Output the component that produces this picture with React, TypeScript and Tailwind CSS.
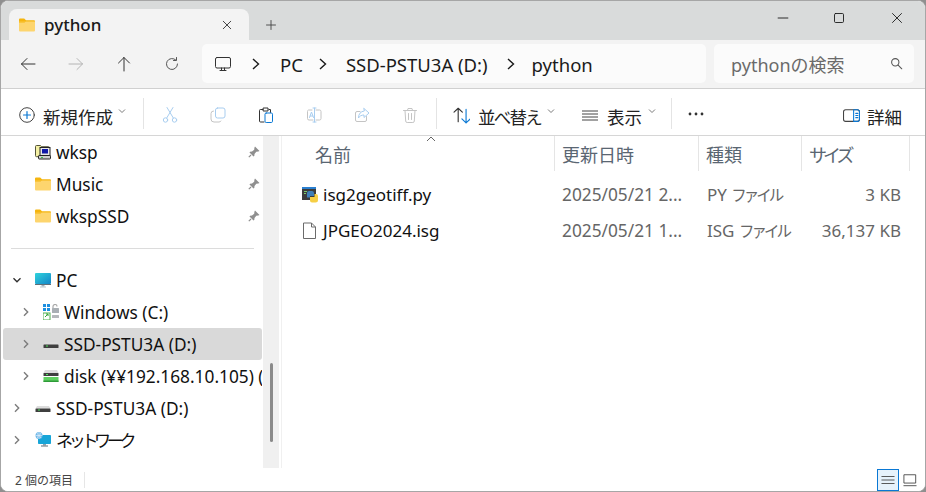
import React from "react";

const S = ({ size = 16, className = "", children, sw = 1.2 }: { size?: number; className?: string; children: React.ReactNode; sw?: number }) => (
  <svg width={size} height={size} viewBox="0 0 16 16" fill="none" stroke="currentColor" strokeWidth={sw} strokeLinecap="round" strokeLinejoin="round" className={`shrink-0 ${className}`}>
    {children}
  </svg>
);

const Folder = ({ size = 16 }: { size?: number }) => (
  <svg width={size} height={size} viewBox="0 0 16 16" className="shrink-0">
    <path d="M0 2.5a1 1 0 0 1 1-1h4.2l1.8 1.7H15a1 1 0 0 1 1 1V5H0z" fill="#f5b50f" />
    <path d="M0 4.5h16v9a1 1 0 0 1-1 1H1a1 1 0 0 1-1-1z" fill="#fdd56e" />
    <path d="M0 4.5h7L5.5 5.6H0z" fill="#f5b50f" />
  </svg>
);

const Wksp = () => (
  <svg width="16" height="16" viewBox="0 0 16 16" className="shrink-0">
    <path d="M.5 2.5a1 1 0 0 1 1-1h4l1 1.2h7a1 1 0 0 1 1 1v8a1 1 0 0 1-1 1h-12a1 1 0 0 1-1-1z" fill="#f4f0a4" stroke="#55553a" />
    <rect x="5" y="3.5" width="10" height="8" fill="#e8e8e8" stroke="#222" />
    <rect x="7" y="5" width="6" height="4.5" fill="#1019a8" />
    <rect x="3.5" y="11.5" width="12" height="3.5" rx=".7" fill="#cfcfcf" stroke="#222" />
    <rect x="6" y="13" width="2" height="1" fill="#38c04c" />
  </svg>
);

const PcIcon = () => (
  <svg width="16" height="16" viewBox="0 0 16 16" className="shrink-0">
    <defs>
      <linearGradient id="pcg" x1="0" y1="0" x2="1" y2="1">
        <stop offset="0" stopColor="#2fd3dc" />
        <stop offset="1" stopColor="#1385c8" />
      </linearGradient>
    </defs>
    <rect x="0" y="1" width="16" height="11" rx="1" fill="url(#pcg)" />
    <rect x="0" y="12" width="16" height="1" fill="#5f6f78" />
    <rect x="6.5" y="13" width="3" height="1.5" fill="#9fb0ba" />
    <rect x="5" y="14.5" width="6" height="1" fill="#bcc7cd" />
  </svg>
);

const WinDrive = () => (
  <svg width="16" height="16" viewBox="0 0 16 16" className="shrink-0">
    <rect x="0" y="0" width="3" height="3" fill="#1d8fe0" />
    <rect x="4" y="0" width="3" height="3" fill="#1d8fe0" />
    <rect x="0" y="4" width="3" height="3" fill="#1d8fe0" />
    <rect x="4" y="4" width="3" height="3" fill="#1d8fe0" />
    <path d="M10 4V2.5a2 2 0 0 1 4 0" fill="none" stroke="#a9a9a9" strokeWidth="1.2" />
    <rect x="9" y="4" width="7" height="5" rx=".5" fill="#a9afb4" />
    <rect x="0" y="9" width="7" height="7" fill="#fff" stroke="#4fb04f" />
    <path d="M2 13l3-3M3 10h2v2" stroke="#3aa83a" fill="none" />
    <rect x="9" y="11" width="7" height="3" rx=".5" fill="#b5b8bb" />
  </svg>
);

const Drive = () => (
  <svg width="16" height="16" viewBox="0 0 16 16" className="shrink-0">
    <path d="M2 6h12l1.5 2.5h-15z" fill="#dcdcdc" />
    <rect x="0.5" y="8.5" width="15" height="3.5" rx=".6" fill="#3f3f3f" />
    <rect x="3" y="9.5" width="2" height="1" fill="#4de35c" />
  </svg>
);

const NetDrive = () => (
  <svg width="16" height="16" viewBox="0 0 16 16" className="shrink-0">
    <path d="M2 2h12l1.5 3h-15z" fill="#dcdcdc" />
    <rect x="0.5" y="5" width="15" height="3" rx=".5" fill="#3f3f3f" />
    <rect x="3" y="6" width="2" height="1" fill="#4de35c" />
    <rect x="0.5" y="9" width="15" height="5" rx=".5" fill="#5fd060" />
    <rect x="0.5" y="12.5" width="15" height="1.5" fill="#2e9b38" />
  </svg>
);

const NetIcon = () => (
  <svg width="16" height="16" viewBox="0 0 16 16" className="shrink-0">
    <rect x="3" y="3" width="13" height="9" rx=".8" fill="#17a5d8" />
    <rect x="8" y="12" width="3" height="1.5" fill="#8fa3ad" />
    <rect x="6" y="13.5" width="7" height="1" fill="#5f6f78" />
    <circle cx="4" cy="3.5" r="3.5" fill="#6fb7e8" />
    <path d="M.5 3.5h7M4 0v7M2 1c1.5 1.5 1.5 4 0 5M6 1c-1.5 1.5-1.5 4 0 5" stroke="#e8f4fb" strokeWidth=".6" fill="none" />
  </svg>
);

const PyIcon = () => (
  <svg width="16" height="16" viewBox="0 0 16 16" className="shrink-0">
    <rect x="0" y="0" width="14" height="13" fill="#3c3c3c" />
    <rect x="0" y="0" width="14" height="2" fill="#2a7fd0" />
    <rect x="2" y="4" width="3" height="1" fill="#7ecb6a" />
    <rect x="2" y="6" width="2" height="1" fill="#7ecb6a" />
    <path d="M5 6a2 2 0 0 1 2-2h3a2 2 0 0 1 2 2v3H8v1.500H5z" fill="#3f7fb8" />
    <path d="M16 9a2 2 0 0 0-2-2h-1.500v3H8v3.500A2 2 0 0 0 10 15.500h3.500a2.500 2.500 0 0 0 2.500-2.500z" fill="#f6cf45" />
  </svg>
);

const DocIcon = () => (
  <svg width="16" height="18" viewBox="0 0 16 18" className="shrink-0">
    <path d="M1.500 1h8l4 4v11.500h-12z" fill="#fff" stroke="#6b6b6b" />
    <path d="M9.500 1v4h4" fill="none" stroke="#6b6b6b" />
  </svg>
);

const Pin = () => (
  <svg width="12" height="12" viewBox="0 0 12 12" className="shrink-0 ml-auto mr-[2px]">
    <path d="M7 .5l4.500 4.500-1.200.6-2 .2-1.800 2.200-.2 2L5.500 10.500 1.500 6.500 2 5.700l2-.2 2.200-1.800.2-2z" fill="#8f8f8f" />
    <path d="M3 9L.8 11.200" stroke="#8f8f8f" strokeWidth="1.2" />
  </svg>
);

const Chev = ({ open }: { open?: boolean }) => (
  <svg width="10" height="10" viewBox="0 0 10 10" fill="none" stroke={open ? "#333" : "#7c7c7c"} strokeWidth="1.4" className="shrink-0">
    {open ? <path d="M1.500 3.200L5 6.700l3.500-3.500" /> : <path d="M3 1.200L6.700 5 3 8.800" />}
  </svg>
);

const Crumb = () => (
  <svg width="10" height="16" viewBox="0 0 10 16" fill="none" stroke="#1a1a1a" strokeWidth="1.4" className="shrink-0">
    <path d="M2 3l5.500 5L2 13" />
  </svg>
);

const Caret = () => (
  <svg width="8" height="6" viewBox="0 0 8 6" fill="none" stroke="#7a7a7a" strokeWidth="1" className="shrink-0 mb-2">
    <path d="M1 1.500L4 4.500l3-3" />
  </svg>
);

const Sep = () => <div className="w-px h-[31px] bg-[#e4e4e4] mb-[4px] shrink-0" />;

const Tool = ({ children }: { children: React.ReactNode }) => (
  <div className="w-[48px] flex justify-center items-center">{children}</div>
);

const Row = ({ icon, label, pin, indent, arrow, selected }: { icon: React.ReactNode; label: React.ReactNode; pin?: boolean; indent?: boolean; arrow?: "open" | "closed"; selected?: boolean }) => (
  <div className={`h-[32px] w-[259px] flex items-center ml-[2px] rounded-[3px] overflow-hidden text-[17.3px] text-[#111] ${selected ? "bg-[#d9d9d9]" : ""}`}>
    <div className={`shrink-0 flex justify-center ${indent ? "w-[40px] pl-[6px]" : "w-[32px] pr-[4px]"}`}>
      {arrow ? <Chev open={arrow === "open"} /> : null}
    </div>
    {icon}
    <span className="ml-[5px] whitespace-nowrap pt-[1px]">{label}</span>
    {pin ? <Pin /> : null}
  </div>
);

const Header = ({ w, children, pad = "pl-[7px]" }: { w: string; children: React.ReactNode; pad?: string }) => (
  <div className={`${w} ${pad} h-[35px] border-r border-[#e5e5e5] pt-[3px] flex items-center text-[18px] text-[#5a6672]`}>{children}</div>
);

const Kata = ({ children }: { children: React.ReactNode }) => (
  <span className="text-[15.5px] tracking-[-3px]">{children}</span>
);

const FileRow = ({ icon, name, date, type, size }: { icon: React.ReactNode; name: string; date: string; type: React.ReactNode; size: string }) => (
  <div className="h-[36px] flex items-center text-[17px] whitespace-nowrap">
    <div className="w-[274px] pl-[20px] flex items-center gap-[5px] text-[#111]">
      {icon}
      <span>{name}</span>
    </div>
    <div className="w-[145px] pl-[6px] text-[#666] text-[17.3px]">{date}</div>
    <div className="w-[103px] pl-[6px] text-[#666]">{type}</div>
    <div className="w-[97px] text-right text-[#666]">{size}</div>
  </div>
);

export default function App() {
  return (
    <div className="w-[926px] h-[492px] bg-[#8f8f8f] font-['Noto_Sans','Noto_Sans_CJK_JP',sans-serif]">
      <div className="w-full h-full border border-[#a6a6a6] rounded-lg overflow-hidden bg-white flex flex-col">
        {/* title bar */}
        <div className="h-[39px] shrink-0 bg-[#d9dbdb] flex items-end pl-[8px]">
          <div className="w-[240px] h-[31px] bg-[#f3f3f3] rounded-t-lg flex items-center pl-[10px] pr-[16px]">
            <Folder size={16} />
            <span className="ml-[9px] text-[17px] font-medium text-[#1a1a1a] leading-none">python</span>
            <S size={12} className="ml-auto text-[#333]"><path d="M3 3l10 10M13 3L3 13" /></S>
          </div>
          <div className="h-[31px] ml-[16px] flex items-center text-[#444]">
            <S size={12}><path d="M8 2v12M2 8h12" /></S>
          </div>
          <div className="ml-auto self-start flex text-[#1a1a1a] pt-[11px]">
            <div className="w-[52px] flex justify-center"><S size={12}><path d="M1.500 8h13" /></S></div>
            <div className="w-[60px] flex justify-center"><S size={12}><rect x="2" y="2" width="12" height="12" rx="1.500" /></S></div>
            <div className="w-[56px] flex justify-center"><S size={12}><path d="M2 2l12 12M14 2L2 14" /></S></div>
          </div>
        </div>

        {/* nav bar */}
        <div className="h-[49px] shrink-0 bg-[#f3f3f3] border-b border-[#d0d0d0] flex items-center pl-[3px] pr-[11px] pb-[1px]">
          <Tool><S size={16} className="text-[#333]" sw={1}><path d="M15 8H1.500M7 2.500L1.500 8 7 13.500" /></S></Tool>
          <Tool><S size={16} className="text-[#b4b4b4]" sw={1}><path d="M1 8h13.500M9 2.500L14.500 8 9 13.500" /></S></Tool>
          <Tool><S size={16} className="text-[#333]" sw={1}><path d="M8 15V1.500M2.500 7L8 1.500 13.500 7" /></S></Tool>
          <Tool><S size={16} className="text-[#555]" sw={1}><path d="M13.500 8a5.500 5.500 0 1 1-1.700-4M12.500 1.500V4.500H9.500" /></S></Tool>
          <div className="ml-[6px] w-[504px] h-[39px] bg-[#fbfbfb] rounded-[5px] flex items-center pl-[13px] text-[18.5px] text-[#1a1a1a] whitespace-nowrap">
            <S size={16} className="text-[#333]" sw={1}><rect x=".5" y="1.500" width="15" height="10.500" rx="1.500" /><path d="M5 14.500h6M6.500 12v2.500M9.500 12v2.500" /></S>
            <span className="ml-[20px]"><Crumb /></span>
            <span className="ml-[19px] pt-[3px]">PC</span>
            <span className="ml-[15px]"><Crumb /></span>
            <span className="ml-[18px] pt-[3px]">SSD-PSTU3A (D:)</span>
            <span className="ml-[18px]"><Crumb /></span>
            <span className="ml-[16px] pt-[3px]">python</span>
          </div>
          <div className="ml-[8px] w-[200px] h-[39px] bg-[#fbfbfb] rounded-[5px] flex items-center pl-[17px] pr-[11px] text-[18px] text-[#6a6a6a] whitespace-nowrap">
            <span className="pt-[3px]">pythonの検索</span>
            <S size={13} className="ml-auto text-[#555]" sw={1.3}><circle cx="6.500" cy="6.500" r="4.500" /><path d="M10 10l4.500 4.500" /></S>
          </div>
        </div>

        {/* toolbar */}
        <div className="h-[47px] shrink-0 bg-white border-b border-[#d6d6d6] flex items-center text-[17.5px] text-[#222] whitespace-nowrap pl-[18px] pr-[23px] pt-[6px]">
          <S size={16}><circle cx="8" cy="8" r="7.300" stroke="#444" strokeWidth="1" /><path d="M8 4.500v7M4.500 8h7" stroke="#0a78d4" /></S>
          <span className="ml-[8px] pt-[5px]">新規作成</span>
          <span className="ml-[5px]"><Caret /></span>
          <span className="ml-[17px]"><Sep /></span>
          <div className="ml-[2px] flex">
            <Tool><S size={16} className="text-[#a8cdef]" sw={1}><circle cx="3.500" cy="13" r="2.200" /><circle cx="12.500" cy="13" r="2.200" /><path d="M4.700 11L11 .5M11.300 11L5 .5" /></S></Tool>
            <Tool><S size={16} className="text-[#a8cdef]" sw={1}><rect x="5.500" y="1" width="9.500" height="10" rx="2" /><path d="M3.500 4A2.500 2.500 0 0 0 1 6.500V12a3 3 0 0 0 3 3h5a2.500 2.500 0 0 0 2-1" stroke="#c4c4c4" /></S></Tool>
            <Tool><S size={16} sw={1}><path d="M5 2.500H2.500a1 1 0 0 0-1 1V14a1 1 0 0 0 1 1H6M11 2.500h1.500v3M5.500 1h4.500v3H5.500z" stroke="#333" /><rect x="7" y="6" width="7.500" height="9.500" rx="1.200" stroke="#0a78d4" /></S></Tool>
            <Tool><S size={16} className="text-[#c4c4c4]" sw={1}><path d="M6 3H2.500a1.500 1.500 0 0 0-1 1.500v7A1.500 1.500 0 0 0 3 13h4M10 3h3.500A1.500 1.500 0 0 1 15 4.500v7a1.500 1.500 0 0 1-1.500 1.500H10" /><path d="M8.500 1v14M7 1h3M7 15h3M3.500 10.500L5.500 5l2 5.500M4.200 9h2.600" stroke="#a8cdef" /></S></Tool>
            <Tool><S size={16} sw={1}><path d="M12.500 9.500V13a1.500 1.500 0 0 1-1.500 1.500H3A1.500 1.500 0 0 1 1.500 13V6A1.500 1.500 0 0 1 3 4.500h3" stroke="#c4c4c4" /><path d="M10 1.500L15 6l-5 4.500V8C7.500 8 5.500 9 4.500 11c0-4 2-6.500 5.500-7z" stroke="#a8cdef" /></S></Tool>
            <Tool><S size={16} className="text-[#c4c4c4]" sw={1}><path d="M1.500 3.500h13M5.500 3.500L6 1.500h4l.5 2M3 3.500l.7 10.500a1.500 1.500 0 0 0 1.500 1.500h5.600a1.500 1.500 0 0 0 1.500-1.500L13 3.500M6.500 6.500v6M9.500 6.500v6" /></S></Tool>
          </div>
          <span className="ml-[2px]"><Sep /></span>
          <S size={18} className="ml-[15px]" sw={1}><path d="M5.500 14V2M1.800 5.500L5.500 2l3.700 3.500" stroke="#333" /><path d="M12.500 3v12M8.800 11.500L12.500 15l3.700-3.500" stroke="#0a78d4" /></S>
          <span className="ml-[8px] pt-[5px] tracking-[-1.75px]">並べ替え</span>
          <span className="ml-[6px]"><Caret /></span>
          <S size={16} className="ml-[27px] text-[#444]" sw={1}><path d="M0 4h16M0 7h16M0 10h16M0 13h16" /></S>
          <span className="ml-[9px] pt-[5px]">表示</span>
          <span className="ml-[6px]"><Caret /></span>
          <span className="ml-[15px]"><Sep /></span>
          <svg width="16" height="4" viewBox="0 0 16 4" className="ml-[16px] mb-[2px] shrink-0" fill="#333"><circle cx="2" cy="2" r="1.400" /><circle cx="8" cy="2" r="1.400" /><circle cx="14" cy="2" r="1.400" /></svg>
          <S size={17} className="ml-auto" sw={1}><rect x=".5" y="2.500" width="15" height="11" rx="2" stroke="#444" /><path d="M10 2.500h3.500a2 2 0 0 1 2 2v7a2 2 0 0 1-2 2H10z" stroke="#0a78d4" /><path d="M12 6h2M12 8h2M12 10h2" stroke="#0a78d4" /></S>
          <span className="ml-[7px] pt-[5px]">詳細</span>
        </div>

        {/* body */}
        <div className="h-[332px] shrink-0 flex bg-white">
          <div className="w-[261px] shrink-0 flex flex-col">
            <Row icon={<Wksp />} label="wksp" pin />
            <Row icon={<Folder />} label="Music" pin />
            <Row icon={<Folder />} label="wkspSSD" pin />
            <div className="h-[32px] flex items-center pl-[10px]">
              <div className="w-[243px] h-px bg-[#dcdcdc]" />
            </div>
            <Row icon={<PcIcon />} label="PC" arrow="open" />
            <Row icon={<WinDrive />} label="Windows (C:)" indent arrow="closed" />
            <Row icon={<Drive />} label="SSD-PSTU3A (D:)" indent arrow="closed" selected />
            <Row icon={<NetDrive />} label="disk (¥¥192.168.10.105) (" indent arrow="closed" />
            <Row icon={<Drive />} label="SSD-PSTU3A (D:)" arrow="closed" />
            <Row icon={<NetIcon />} label={<span className="text-[17px] tracking-[-4.3px]">ネットワーク</span>} arrow="closed" />
          </div>
          <div className="w-[16px] ml-[1px] shrink-0 bg-[#f0f0f0] flex justify-center relative">
            <div className="absolute top-[227px] w-[3px] h-[79px] bg-[#8a8a8a] rounded-full" />
          </div>
          <div className="w-[2px] shrink-0" />
          <div className="w-px shrink-0 bg-[#f0f0f0]" />
          <div className="flex-1 min-w-0 relative">
            <svg width="10" height="6" viewBox="0 0 10 6" fill="none" stroke="#666" className="absolute left-[144px] top-0"><path d="M1 5l4-4 4 4" /></svg>
            <div className="flex">
              <Header w="w-[273px]" pad="pl-[33px]">名前</Header>
              <Header w="w-[144px]">更新日時</Header>
              <Header w="w-[103px]">種類</Header>
              <Header w="w-[108px]"><span className="tracking-[-4px]">サイズ</span></Header>
            </div>
            <div className="mt-[6px]">
              <FileRow icon={<PyIcon />} name="isg2geotiff.py" date="2025/05/21 2..." type={<>PY <Kata>ファイル</Kata></>} size="3 KB" />
              <FileRow icon={<DocIcon />} name="JPGEO2024.isg" date="2025/05/21 1..." type={<>ISG <Kata>ファイル</Kata></>} size="36,137 KB" />
            </div>
          </div>
        </div>

        {/* status */}
        <div className="flex-1 min-h-0 bg-white flex items-center pl-[14px] pr-[4px] text-[12px] text-[#444]">
          <span className="pt-[2px]">2 個の項目</span>
          <div className="ml-[11px] w-px h-[16px] bg-[#e6e6e6]" />
          <div className="ml-auto flex items-center">
            <div className="w-[22px] h-[22px] border border-[#0a78d4] bg-[#e6f2fb] flex items-center justify-center">
              <S size={14} className="text-[#444]" sw={1}><path d="M1 4h14M1 8h14M1 12h14" /></S>
            </div>
            <div className="w-[22px] h-[22px] flex items-center justify-center">
              <S size={14} className="text-[#444]" sw={1}><rect x="1.500" y="2" width="13" height="9.500" /><path d="M1 14.500h14" /></S>
            </div>
          </div>
        </div>
      </div>
    </div>
  );
}
